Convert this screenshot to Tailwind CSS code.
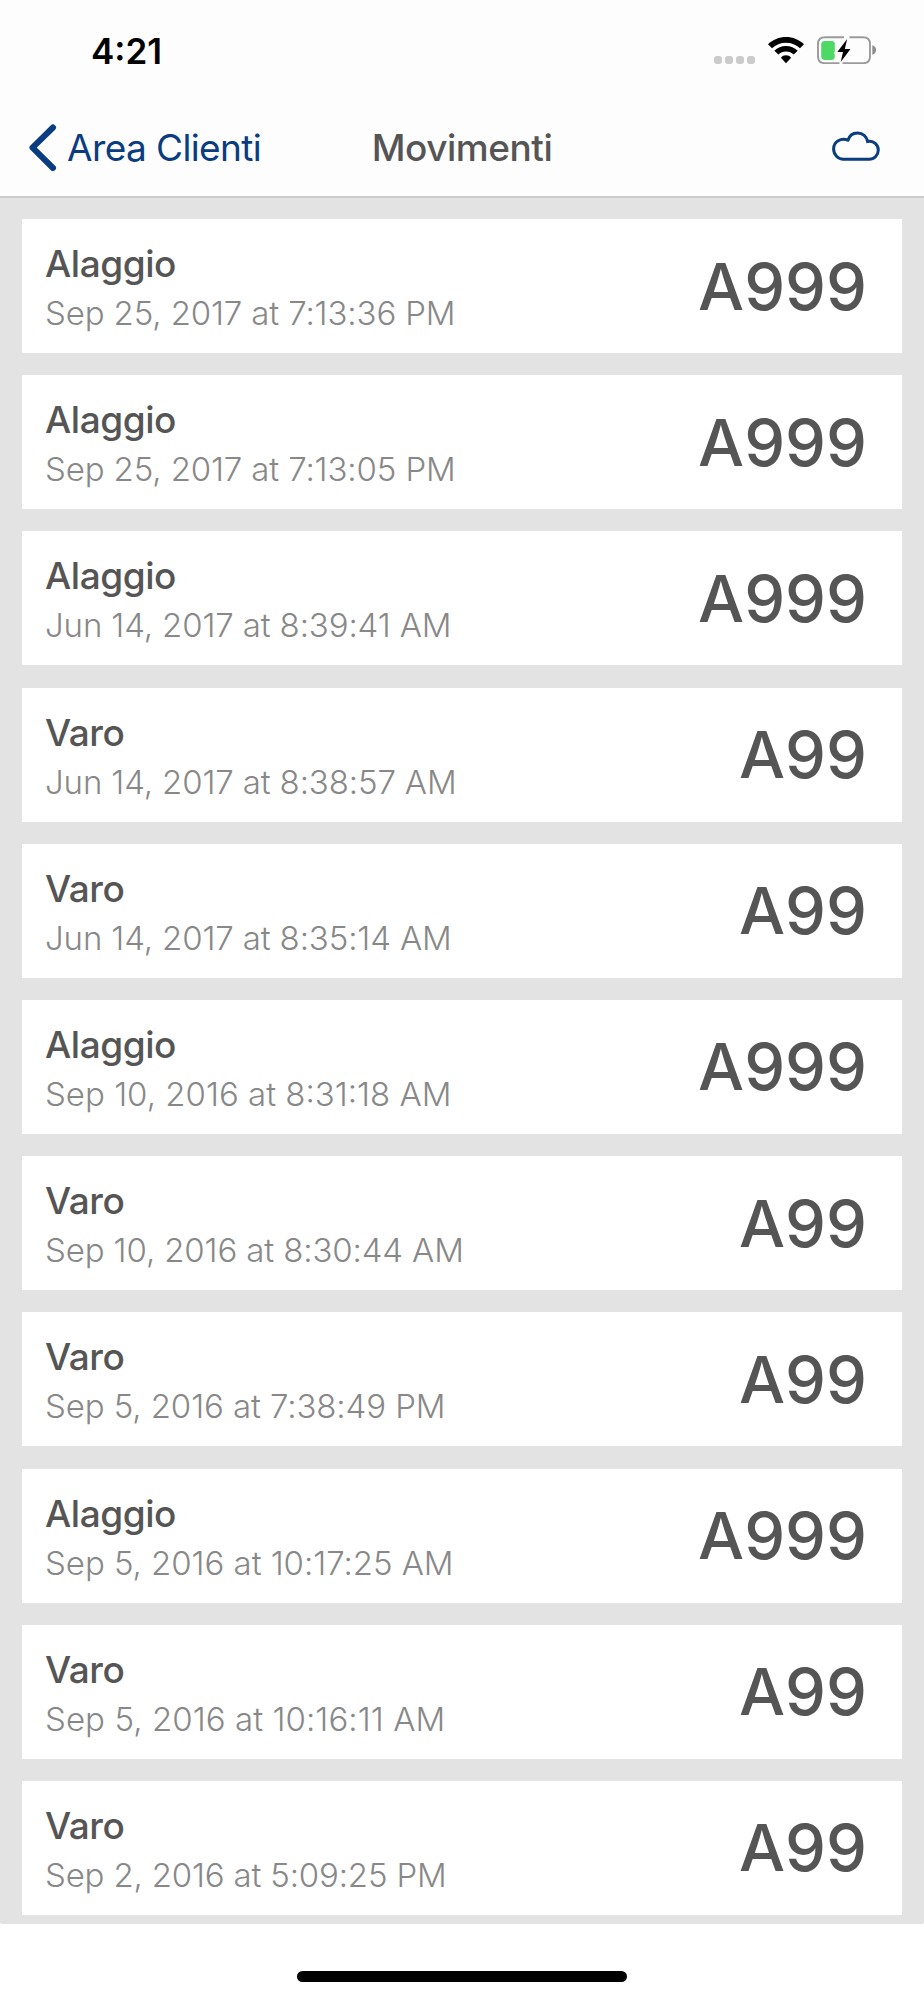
<!DOCTYPE html>
<html lang="it">

<head>
    <meta charset="UTF-8">
    <meta name="viewport" content="width=device-width, initial-scale=1.0">
    <title>Movimenti</title>
    <script src="https://cdn.jsdelivr.net/npm/@tailwindcss/browser@4"></script>
</head>

<body class="w-[924px] h-[2000px] overflow-hidden flex flex-col bg-white text-[#555555] font-['Inter','Liberation_Sans',sans-serif]">
    <header class="bg-[#fdfdfd] border-b-2 border-[#cbcbcb]">
        <!-- Status bar -->
        <div class="h-[100px] pt-[30px] pl-[91px] pr-[47px] flex items-start justify-between">
            <span class="pt-px text-[35px] leading-10 font-semibold text-black">4:21</span>
            <div class="flex items-start pt-1.5">
                <div class="flex gap-[3px] pt-5">
                    <span class="size-2 rounded-[3px] bg-[#cbcbcb]"></span>
                    <span class="size-2 rounded-[3px] bg-[#cbcbcb]"></span>
                    <span class="size-2 rounded-[3px] bg-[#cbcbcb]"></span>
                    <span class="size-2 rounded-[3px] bg-[#cbcbcb]"></span>
                </div>
                <svg class="ml-[13px] w-9 h-7" viewBox="0 0 36 28" fill="#000">
                    <path d="M18 1C11.100 1 4.800 3.700 0 8.200L4 12.200C7.700 8.700 12.600 6.700 18 6.700S28.300 8.700 32 12.200L36 8.200C31.200 3.700 24.900 1 18 1Z" />
                    <path d="M18 10C13.500 10 9.400 11.700 6.300 14.700L10.300 18.600C12.400 16.700 15 15.600 18 15.600S23.600 16.700 25.700 18.600L29.700 14.700C26.600 11.700 22.500 10 18 10Z" />
                    <path d="M18 19.200C15.900 19.200 14 20 12.900 21.700L18 27.200L23.100 21.700C22 20 20.100 19.200 18 19.200Z" />
                </svg>
                <svg class="ml-[13px] w-[60px] h-7" viewBox="0 0 60 28" fill="none">
                    <path d="M27 1.300H8C3.500 1.300 1 3.800 1 8V20.500C1 24.700 3.500 27.200 8 27.200H22.500M32.500 1.300H46C50.500 1.300 53 3.800 53 8V20.500C53 24.700 50.500 27.200 46 27.200H25.500" stroke="#9b9b9b" stroke-width="1.900" />
                    <path d="M55.300 9.300C60.300 10.500 60.300 17.500 55.300 18.700Z" fill="#8c8c8c" />
                    <path d="M8 5H14.500C16.800 5 17.800 6 17.800 8V15.500L16.800 17.300L17.800 19V20.500C17.800 22.800 16.800 24 14.500 24H8C5.600 24 4.200 22.800 4.200 20.500V8.500C4.200 6 5.600 5 8 5Z" fill="#4cd964" />
                    <path d="M30.200 3L20.300 15.900H26L23.700 26L33.500 12.900H27.800Z" fill="#000" />
                </svg>
            </div>
        </div>

        <!-- Navigation bar -->
        <nav class="h-24 grid grid-cols-3 items-center text-[37px] leading-[48px]">
            <a class="flex items-center pl-7 text-[#093c80] tracking-[-0.6px] whitespace-nowrap">
                <svg class="w-[30px] h-12 mr-[9px]" viewBox="0 0 30 48" fill="none" stroke="currentColor" stroke-width="6" stroke-linecap="round" stroke-linejoin="round">
                    <path d="M25 3.500L4.500 23.700L25 44" />
                </svg>
                Area Clienti
            </a>
            <h1 class="text-center font-medium tracking-[-0.45px]">Movimenti</h1>
            <svg class="justify-self-end mr-11 mb-[5px] w-12 h-8" viewBox="0 0 48 32" fill="none" stroke="#093c80" stroke-width="3">
                <path d="M11.500 29.200H37C42.500 29.200 46.300 25 46.300 20C46.300 15 42 10.900 37.200 11.200L35.600 11.500C34.800 6.400 30.600 2.900 25.600 2.900C21 2.900 17.300 5.700 16.100 10L15.900 10.200C9 7.300 1.600 11.700 1.600 18.800C1.600 24.600 6 29.200 11.500 29.200Z" />
            </svg>
        </nav>
    </header>

    <main class="h-[1726px] bg-[#e3e3e3] px-[22px] pt-[21px] overflow-hidden rounded-b-[2px]">
        <ul class="flex flex-col gap-[22.2px]">
            <li class="h-[134px] shrink-0 bg-white flex items-center justify-between pl-[23px] pr-[35px]">
                <div class="pt-[3px]">
                    <h2 class="text-[37px] leading-[48px] font-medium tracking-[-0.45px]">Alaggio</h2>
                    <p class="mt-[3px] text-[33px] leading-[44px] font-light tracking-[-0.13px] text-[#888888]">Sep 25, 2017 at 7:13:36 PM</p>
                </div>
                <span class="pt-px text-[65px] leading-[132px] font-medium">A999</span>
            </li>
            <li class="h-[134px] shrink-0 bg-white flex items-center justify-between pl-[23px] pr-[35px]">
                <div class="pt-[3px]">
                    <h2 class="text-[37px] leading-[48px] font-medium tracking-[-0.45px]">Alaggio</h2>
                    <p class="mt-[3px] text-[33px] leading-[44px] font-light tracking-[-0.13px] text-[#888888]">Sep 25, 2017 at 7:13:05 PM</p>
                </div>
                <span class="pt-px text-[65px] leading-[132px] font-medium">A999</span>
            </li>
            <li class="h-[134px] shrink-0 bg-white flex items-center justify-between pl-[23px] pr-[35px]">
                <div class="pt-[3px]">
                    <h2 class="text-[37px] leading-[48px] font-medium tracking-[-0.45px]">Alaggio</h2>
                    <p class="mt-[3px] text-[33px] leading-[44px] font-light tracking-[-0.13px] text-[#888888]">Jun 14, 2017 at 8:39:41 AM</p>
                </div>
                <span class="pt-px text-[65px] leading-[132px] font-medium">A999</span>
            </li>
            <li class="h-[134px] shrink-0 bg-white flex items-center justify-between pl-[23px] pr-[35px]">
                <div class="pt-[3px]">
                    <h2 class="text-[37px] leading-[48px] font-medium tracking-[-0.45px]">Varo</h2>
                    <p class="mt-[3px] text-[33px] leading-[44px] font-light tracking-[-0.13px] text-[#888888]">Jun 14, 2017 at 8:38:57 AM</p>
                </div>
                <span class="pt-px text-[65px] leading-[132px] font-medium">A99</span>
            </li>
            <li class="h-[134px] shrink-0 bg-white flex items-center justify-between pl-[23px] pr-[35px]">
                <div class="pt-[3px]">
                    <h2 class="text-[37px] leading-[48px] font-medium tracking-[-0.45px]">Varo</h2>
                    <p class="mt-[3px] text-[33px] leading-[44px] font-light tracking-[-0.13px] text-[#888888]">Jun 14, 2017 at 8:35:14 AM</p>
                </div>
                <span class="pt-px text-[65px] leading-[132px] font-medium">A99</span>
            </li>
            <li class="h-[134px] shrink-0 bg-white flex items-center justify-between pl-[23px] pr-[35px]">
                <div class="pt-[3px]">
                    <h2 class="text-[37px] leading-[48px] font-medium tracking-[-0.45px]">Alaggio</h2>
                    <p class="mt-[3px] text-[33px] leading-[44px] font-light text-[#888888]">Sep 10, 2016 at 8:31:18 AM</p>
                </div>
                <span class="pt-px text-[65px] leading-[132px] font-medium">A999</span>
            </li>
            <li class="h-[134px] shrink-0 bg-white flex items-center justify-between pl-[23px] pr-[35px]">
                <div class="pt-[3px]">
                    <h2 class="text-[37px] leading-[48px] font-medium tracking-[-0.45px]">Varo</h2>
                    <p class="mt-[3px] text-[33px] leading-[44px] font-light tracking-[-0.13px] text-[#888888]">Sep 10, 2016 at 8:30:44 AM</p>
                </div>
                <span class="pt-px text-[65px] leading-[132px] font-medium">A99</span>
            </li>
            <li class="h-[134px] shrink-0 bg-white flex items-center justify-between pl-[23px] pr-[35px]">
                <div class="pt-[3px]">
                    <h2 class="text-[37px] leading-[48px] font-medium tracking-[-0.45px]">Varo</h2>
                    <p class="mt-[3px] text-[33px] leading-[44px] font-light tracking-[-0.1px] text-[#888888]">Sep 5, 2016 at 7:38:49 PM</p>
                </div>
                <span class="pt-px text-[65px] leading-[132px] font-medium">A99</span>
            </li>
            <li class="h-[134px] shrink-0 bg-white flex items-center justify-between pl-[23px] pr-[35px]">
                <div class="pt-[3px]">
                    <h2 class="text-[37px] leading-[48px] font-medium tracking-[-0.45px]">Alaggio</h2>
                    <p class="mt-[3px] text-[33px] leading-[44px] font-light tracking-[-0.05px] text-[#888888]">Sep 5, 2016 at 10:17:25 AM</p>
                </div>
                <span class="pt-px text-[65px] leading-[132px] font-medium">A999</span>
            </li>
            <li class="h-[134px] shrink-0 bg-white flex items-center justify-between pl-[23px] pr-[35px]">
                <div class="pt-[3px]">
                    <h2 class="text-[37px] leading-[48px] font-medium tracking-[-0.45px]">Varo</h2>
                    <p class="mt-[3px] text-[33px] leading-[44px] font-light tracking-[0.07px] text-[#888888]">Sep 5, 2016 at 10:16:11 AM</p>
                </div>
                <span class="pt-px text-[65px] leading-[132px] font-medium">A99</span>
            </li>
            <li class="h-[134px] shrink-0 bg-white flex items-center justify-between pl-[23px] pr-[35px]">
                <div class="pt-[3px]">
                    <h2 class="text-[37px] leading-[48px] font-medium tracking-[-0.45px]">Varo</h2>
                    <p class="mt-[3px] text-[33px] leading-[44px] font-light tracking-[-0.18px] text-[#888888]">Sep 2, 2016 at 5:09:25 PM</p>
                </div>
                <span class="pt-px text-[65px] leading-[132px] font-medium">A99</span>
            </li>
        </ul>
    </main>

    <!-- Home indicator -->
    <footer class="flex-1 flex justify-center pt-[47px]">
        <div class="w-[330px] h-[11px] rounded-full bg-black"></div>
    </footer>
</body>

</html>
